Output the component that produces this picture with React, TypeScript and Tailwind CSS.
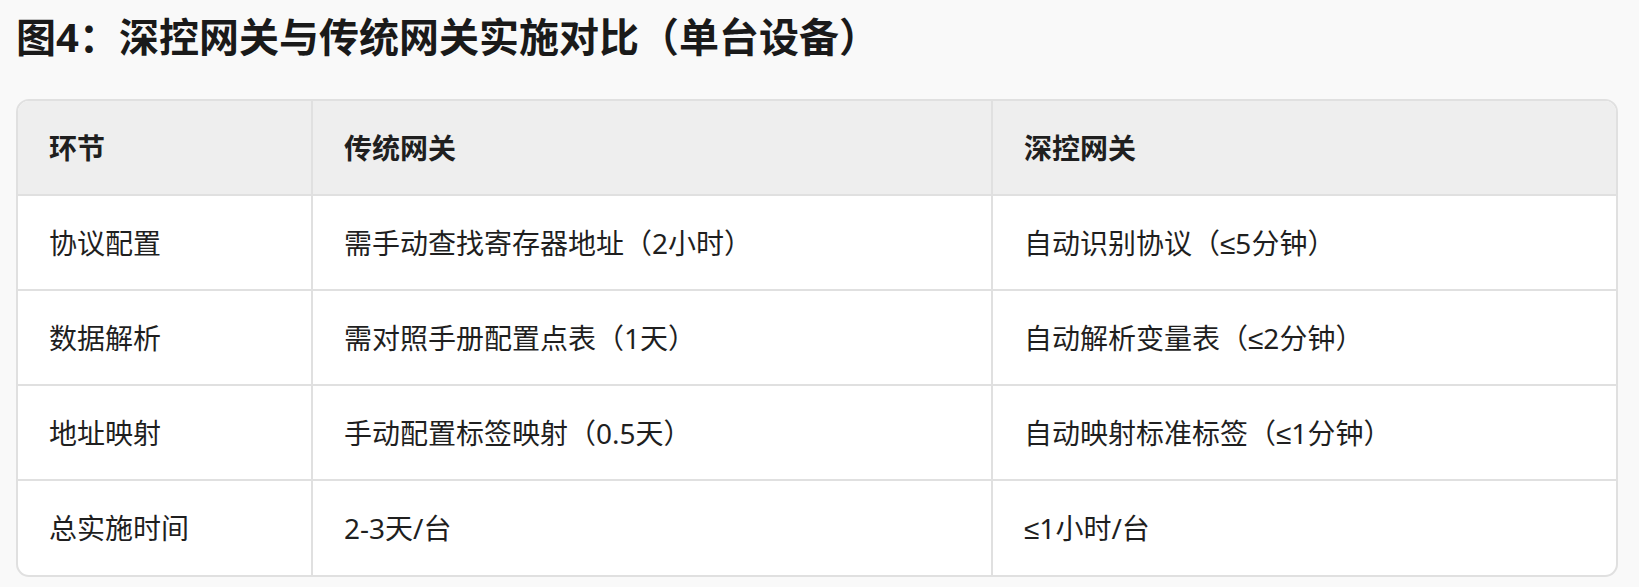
const rows = [
  ["协议配置", "需手动查找寄存器地址（2小时）", "自动识别协议（≤5分钟）"],
  ["数据解析", "需对照手册配置点表（1天）", "自动解析变量表（≤2分钟）"],
  ["地址映射", "手动配置标签映射（0.5天）", "自动映射标准标签（≤1分钟）"],
  ["总实施时间", "2-3天/台", "≤1小时/台"],
];

const headers = ["环节", "传统网关", "深控网关"];

const font = "font-['Noto_Sans','Liberation_Sans','Noto_Sans_CJK_SC',sans-serif]";

export default function App() {
  return (
    <div className={`min-h-[587px] w-full bg-[#f9f9f9] pl-4 pr-[21px] pt-[9px] text-[#1f1f1f] ${font}`}>
      <h2 className="text-[40px] font-bold leading-[56px] text-[#1a1a1a]">
        图4：深控网关与传统网关实施对比（单台设备）
      </h2>
      <div className="mt-[34px] overflow-hidden rounded-[13px] border-2 border-[#e0e0e0] bg-white">
        <table className="w-full table-fixed border-collapse">
          <colgroup>
            <col className="w-[294px]" />
            <col className="w-[680px]" />
            <col />
          </colgroup>
          <thead>
            <tr className="bg-[#eeeeee]">
              {headers.map((h, i) => (
                <th
                  key={h}
                  className={`h-[94px] border-b-2 border-[#e0e0e0] pl-[31px] text-left text-[28px] font-bold ${
                    i < 2 ? "border-r-2" : ""
                  }`}
                >
                  {h}
                </th>
              ))}
            </tr>
          </thead>
          <tbody>
            {rows.map((r, ri) => (
              <tr key={r[0]}>
                {r.map((c, ci) => (
                  <td
                    key={ci}
                    className={`h-[95px] border-[#e0e0e0] pl-[31px] text-[28px] font-normal ${
                      ci < 2 ? "border-r-2" : ""
                    } ${ri < rows.length - 1 ? "border-b-2" : ""}`}
                  >
                    {c}
                  </td>
                ))}
              </tr>
            ))}
          </tbody>
        </table>
      </div>
    </div>
  );
}
